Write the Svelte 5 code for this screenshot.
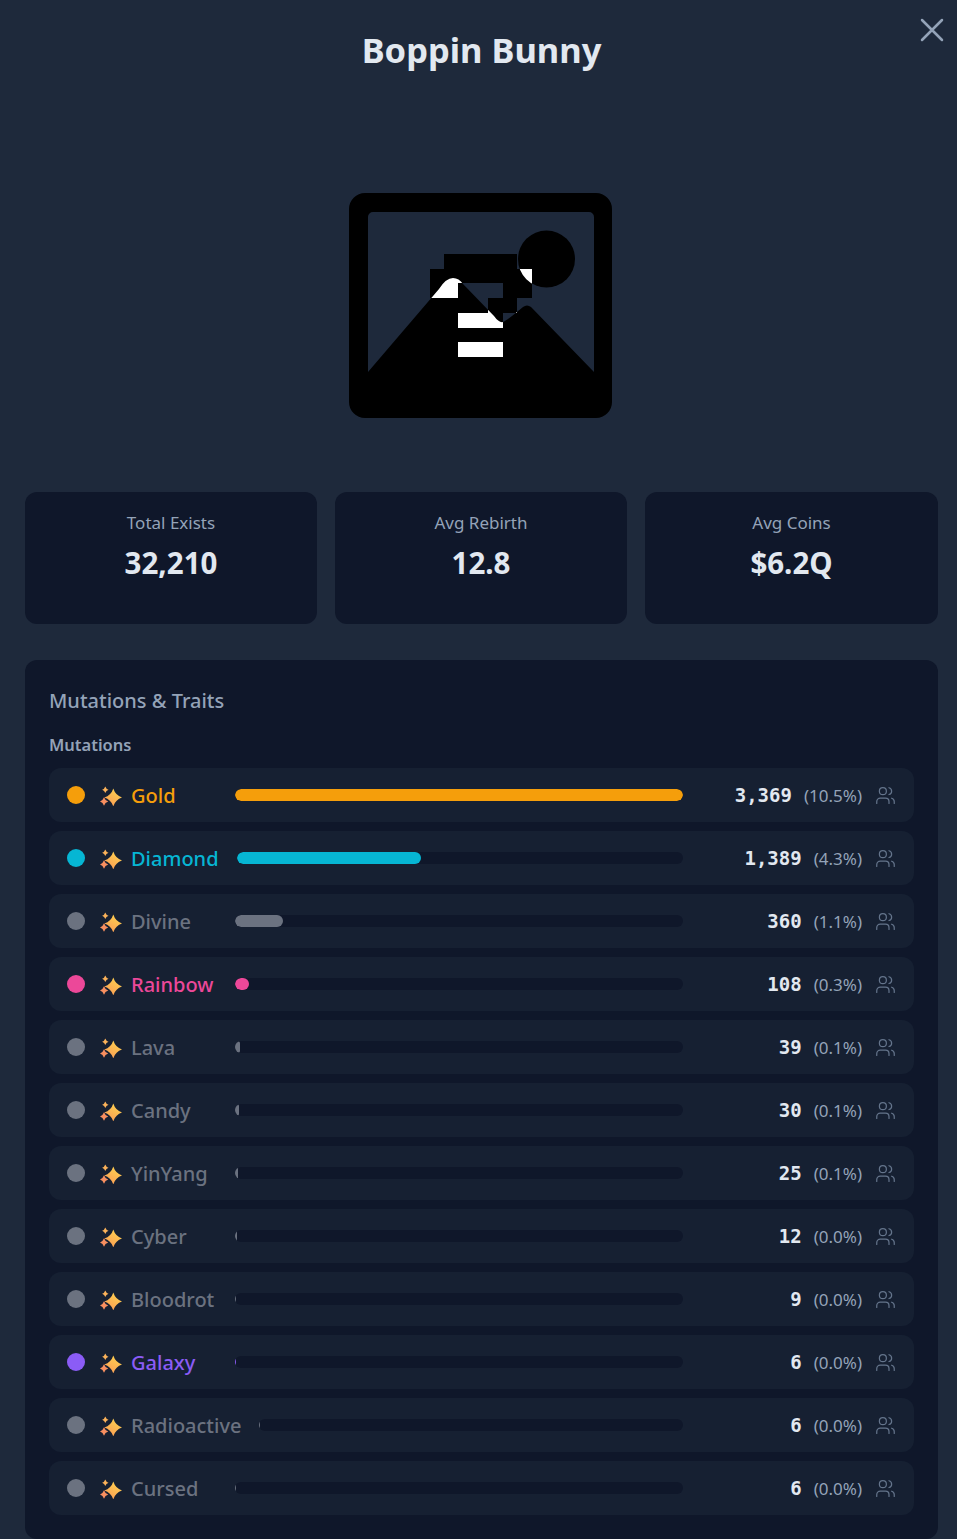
<script>
	const stats = [
		{ label: "Total Exists", value: "32,210" },
		{ label: "Avg Rebirth", value: "12.8" },
		{ label: "Avg Coins", value: "$6.2Q" }
	];

	const mutations = [
		{ name: "Gold", count: 3369, pct: "10.5", color: "#f59e0b" },
		{ name: "Diamond", count: 1389, pct: "4.3", color: "#06b6d4" },
		{ name: "Divine", count: 360, pct: "1.1", color: "#6b7280" },
		{ name: "Rainbow", count: 108, pct: "0.3", color: "#ec4899" },
		{ name: "Lava", count: 39, pct: "0.1", color: "#6b7280" },
		{ name: "Candy", count: 30, pct: "0.1", color: "#6b7280" },
		{ name: "YinYang", count: 25, pct: "0.1", color: "#6b7280" },
		{ name: "Cyber", count: 12, pct: "0.0", color: "#6b7280" },
		{ name: "Bloodrot", count: 9, pct: "0.0", color: "#6b7280" },
		{ name: "Galaxy", count: 6, pct: "0.0", color: "#8b5cf6" },
		{ name: "Radioactive", count: 6, pct: "0.0", color: "#6b7280" },
		{ name: "Cursed", count: 6, pct: "0.0", color: "#6b7280" }
	];

	const maxCount = mutations[0].count;
	const star = (cx, cy, r) => {
		const k = r * 0.24;
		return `M${cx} ${cy - r}Q${cx + k} ${cy - k} ${cx + r} ${cy}Q${cx + k} ${cy + k} ${cx} ${cy + r}Q${cx - k} ${cy + k} ${cx - r} ${cy}Q${cx - k} ${cy - k} ${cx} ${cy - r}Z`;
	};

	const mountains =
		"M19 179 L90 96 Q97 85 104 85 Q110 85 114 91 L145 123 Q150 130 154 129 Q157 128 168 119 L174 114 Q178 111 182 114 L245 179 V225 H19 Z";
	const sun = "M226 66a28.500 28.500 0 1 0 -57 0a28.500 28.500 0 1 0 57 0Z";
	const mark =
		"M95 61H168V76H183V105H168V120H154V135H109V120H139V105H154V90H109V105H81V76H95Z M109 149H154V164H109Z";
</script>

<div class="page">
	<button class="close" aria-label="Close">
		<svg viewBox="0 0 24 24" width="30" height="30" fill="none" stroke="currentColor" stroke-width="2" stroke-linecap="round">
			<path d="M4 4 20 20M20 4 4 20" />
		</svg>
	</button>

	<h1>Boppin Bunny</h1>

	<div class="picture">
		<svg viewBox="0 0 263 225" width="263" height="225">
			<defs>
				<clipPath id="overlap">
					<path d={mountains} />
					<path d={sun} />
				</clipPath>
			</defs>
			<path
				fill-rule="evenodd"
				d="M16 0H247A16 16 0 0 1 263 16V209A16 16 0 0 1 247 225H16A16 16 0 0 1 0 209V16A16 16 0 0 1 16 0ZM24 19A5 5 0 0 0 19 24V201A5 5 0 0 0 24 206H240A5 5 0 0 0 245 201V24A5 5 0 0 0 240 19Z"
			/>
			<path d={mountains} />
			<path d={sun} />
			<path d={mark} />
			<path d={mark} fill="#fff" clip-path="url(#overlap)" />
		</svg>
	</div>

	<div class="stats">
		{#each stats as stat}
			<div class="stat">
				<div class="stat-label">{stat.label}</div>
				<div class="stat-value">{stat.value}</div>
			</div>
		{/each}
	</div>

	<section class="panel">
		<h2>Mutations &amp; Traits</h2>
		<h3>Mutations</h3>
		<div class="rows">
			{#each mutations as m}
				<div class="row">
					<span class="dot" style="background: {m.color}"></span>
					<svg class="sparkle" viewBox="0 0 22 22" width="22" height="22">
						<defs>
							<linearGradient id="spark" x1="0.8" y1="0" x2="0.2" y2="1">
								<stop offset="0" stop-color="#fdd44f" />
								<stop offset="1" stop-color="#fb9a55" />
							</linearGradient>
						</defs>
						<path d={star(13.3, 13.500, 9)} fill="url(#spark)" />
						<path d={star(5.3, 5.700, 3.200)} fill="#fbb25a" />
						<path d={star(4, 17.500, 4.200)} fill="#f88f60" />
					</svg>
					<span class="name" style="color: {m.color}">{m.name}</span>
					<div class="track">
						<div class="fill" style="width: {(m.count / maxCount) * 100}%; background: {m.color}"></div>
					</div>
					<div class="nums">
						<span class="count">{m.count.toLocaleString("en-US")}</span>
						<span class="pct">({m.pct}%)</span>
						<svg class="users" viewBox="0 0 24 24" width="21" height="21" fill="none" stroke="currentColor" stroke-width="1.4" stroke-linecap="round" stroke-linejoin="round">
							<path d="M16 21v-2a4 4 0 0 0-4-4H6a4 4 0 0 0-4 4v2" />
							<circle cx="9" cy="7" r="4" />
							<path d="M22 21v-2a4 4 0 0 0-3-3.870" />
							<path d="M16 3.130a4 4 0 0 1 0 7.750" />
						</svg>
					</div>
				</div>
			{/each}
		</div>
	</section>
</div>

<style>
	:global(body) {
		background: #1e293b;
		font-family: "Noto Sans", "Open Sans", sans-serif;
	}

	.page {
		position: relative;
		box-sizing: border-box;
		height: 1539px;
		padding: 25px 19px 0 25px;
		overflow: hidden;
	}

	.close {
		position: absolute;
		top: 15px;
		right: 10px;
		padding: 0;
		border: 0;
		background: none;
		color: #94a3b8;
		line-height: 0;
	}

	h1 {
		margin: 0;
		font-size: 34.500px;
		line-height: 50px;
		font-weight: 700;
		text-align: center;
		color: #e2e8f0;
	}

	.picture {
		display: flex;
		justify-content: center;
		margin-top: 118px;
		padding-right: 2px;
		line-height: 0;
	}

	.stats {
		display: grid;
		grid-template-columns: 292px 292px 1fr;
		gap: 18px;
		margin-top: 74px;
	}

	.stat {
		box-sizing: border-box;
		height: 132px;
		padding-top: 19px;
		border-radius: 12px;
		background: #0f172a;
		text-align: center;
	}

	.stat-label {
		font-size: 17px;
		line-height: 24px;
		color: #94a3b8;
	}

	.stat-value {
		margin-top: 7px;
		font-size: 29.500px;
		line-height: 42px;
		font-weight: 700;
		color: #e2e8f0;
	}

	.panel {
		box-sizing: border-box;
		height: 879px;
		margin-top: 36px;
		padding: 24px;
		border-radius: 12px;
		background: #0f172a;
	}

	h2 {
		margin: 0;
		font-size: 20px;
		line-height: 34px;
		font-weight: 500;
		color: #94a3b8;
	}

	h3 {
		margin: 15px 0 0;
		font-size: 16.500px;
		line-height: 24px;
		font-weight: 600;
		color: #94a3b8;
	}

	.rows {
		display: flex;
		flex-direction: column;
		gap: 9px;
		margin-top: 11px;
	}

	.row {
		display: flex;
		align-items: center;
		box-sizing: border-box;
		height: 54px;
		padding: 0 18px;
		border-radius: 12px;
		background: #162032;
	}

	.dot {
		flex: none;
		width: 18px;
		height: 18px;
		border-radius: 50%;
	}

	.sparkle {
		flex: none;
		margin: 0 9px 0 15px;
	}

	.name {
		flex: none;
		min-width: 86px;
		margin: 2px 18px 0 0;
		font-size: 20px;
		line-height: 30px;
		font-weight: 500;
	}

	.track {
		flex: 1;
		height: 12px;
		border-radius: 6px;
		background: #0f172a;
		overflow: hidden;
	}

	.fill {
		height: 100%;
		border-radius: 6px;
	}

	.nums {
		flex: none;
		display: flex;
		align-items: center;
		justify-content: flex-end;
		width: 213px;
		gap: 12px;
	}

	.count {
		font-family: "DejaVu Sans Mono", monospace;
		font-size: 19px;
		font-weight: 700;
		color: #e2e8f0;
	}

	.pct {
		font-size: 17px;
		color: #94a3b8;
	}

	.users {
		margin-left: 1px;
		color: #64748b;
	}
</style>
